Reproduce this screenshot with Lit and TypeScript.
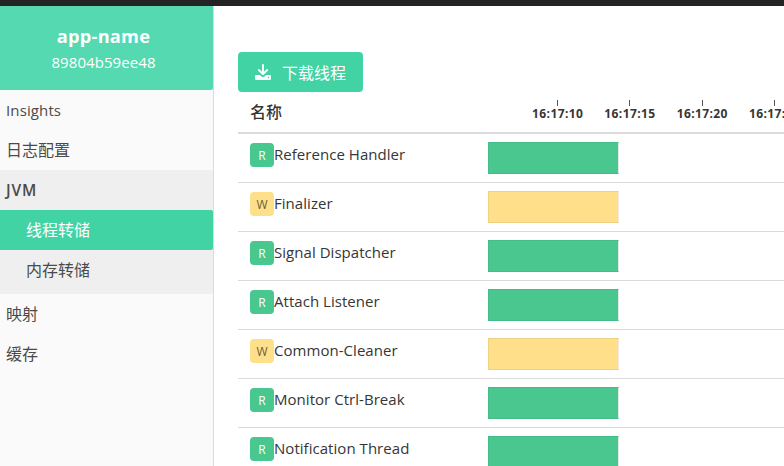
import { LitElement, html, css } from "lit";
import { customElement } from "lit/decorators.js";
import { classMap } from "lit/directives/class-map.js";

type ThreadState = "R" | "W";
interface Thread { name: string; state: ThreadState; }

const THREADS: Thread[] = [
  { name: "Reference Handler", state: "R" },
  { name: "Finalizer", state: "W" },
  { name: "Signal Dispatcher", state: "R" },
  { name: "Attach Listener", state: "R" },
  { name: "Common-Cleaner", state: "W" },
  { name: "Monitor Ctrl-Break", state: "R" },
  { name: "Notification Thread", state: "R" },
];

const TICKS = ["16:17:10", "16:17:15", "16:17:20", "16:17:25"];

@customElement("instance-sidebar")
class InstanceSidebar extends LitElement {
  static styles = css`
    :host { display: block; box-sizing: border-box; width: 214px; flex: none; background: #fafafa; border-right: 1px solid #dbdbdb; color: #4a4a4a; }
    .head { height: 84px; box-sizing: border-box; padding: 17px 6px 0 0; background: #55d9b0; color: #fff; text-align: center; border-radius: 0 0 2px 0; }
    .title { font-size: 18.2px; font-weight: 700; line-height: 26px; letter-spacing: 0.25px; }
    .id { font-size: 15px; line-height: 26px; letter-spacing: 0.08px; }
    .item { height: 40px; line-height: 40px; padding-left: 6px; font-size: 16px; }
    .latin { font-size: 15px; letter-spacing: 0.12px; }
    .group { background: #efefef; padding-bottom: 4px; }
    .strong { font-weight: 600; font-size: 15.5px; letter-spacing: 0.9px; }
    .sub { padding-left: 26px; }
    .active { background: #42d3a5; color: #fff; border-radius: 0 2px 2px 0; }
  `;
  render() {
    return html`
      <div class="head">
        <div class="title">app-name</div>
        <div class="id">89804b59ee48</div>
      </div>
      <div class="item latin">Insights</div>
      <div class="item">日志配置</div>
      <div class="group">
        <div class="item latin strong">JVM</div>
        <div class="item sub active">线程转储</div>
        <div class="item sub">内存转储</div>
      </div>
      <div class="item">映射</div>
      <div class="item">缓存</div>
    `;
  }
}

@customElement("thread-timeline")
class ThreadTimeline extends LitElement {
  static styles = css`
    :host { display: block; color: #363636; }
    .header { display: flex; height: 40px; border-bottom: 2px solid #dbdbdb; }
    .label { width: 238px; flex: none; padding-left: 12px; font-size: 16px; font-weight: 500; line-height: 40px; box-sizing: border-box; }
    .axis { display: flex; flex: none; padding-left: 45.5px; padding-top: 8px; }
    .tick { width: 72.3px; display: flex; flex-direction: column; align-items: center; font-size: 12px; font-weight: 700; line-height: 15px; letter-spacing: 0.4px; }
    .mark { width: 1px; height: 6px; background: #555; }
    .row { display: flex; height: 48px; border-bottom: 1px solid #dbdbdb; }
    .name { display: flex; box-sizing: border-box; width: 250px; flex: none; padding: 9px 0 0 12px; }
    .badge { width: 24px; height: 24px; border-radius: 4px; background: #48c78e; color: #fff; font-size: 12px; line-height: 25px; text-align: center; flex: none; }
    .text { font-size: 15px; line-height: 22px; letter-spacing: 0.04px; white-space: nowrap; }
    .bar { box-sizing: border-box; width: 131px; height: 32px; margin-top: 8px; background: #4ac78f; border: 1px solid #45bd88; border-right: 1px solid #e4e9e7; }
    .bar.waiting { background: #ffdf8a; border-color: #eed182; border-right-color: #ebe9e2; }
    .badge.waiting { background: #ffe08a; color: #6b5e3a; }
  `;
  render() {
    return html`
      <div class="header">
        <div class="label">名称</div>
        <div class="axis">
          ${TICKS.map((t) => html`<div class="tick"><span class="mark"></span><span>${t}</span></div>`)}
        </div>
      </div>
      ${THREADS.map((t) => {
        const waiting = t.state === "W";
        return html`<div class="row">
          <div class="name">
            <span class=${classMap({ badge: true, waiting })}>${t.state}</span>
            <span class="text">${t.name}</span>
          </div>
          <div class=${classMap({ bar: true, waiting })}></div>
        </div>`;
      })}
    `;
  }
}

@customElement("app-root")
class AppRoot extends LitElement {
  static styles = css`
    :host { display: flex; flex-direction: column; height: 100vh; overflow: hidden; background: #fff; font-family: "Open Sans", "Noto Sans CJK SC", sans-serif; }
    .top { height: 6px; flex: none; background: #242424; }
    .body { display: flex; flex: 1; min-height: 0; }
    .main { flex: 1; min-width: 0; overflow: hidden; padding: 46px 0 0 24px; }
    .download { display: flex; align-items: center; box-sizing: border-box; width: 125px; height: 40px; padding: 0 0 0 17px; gap: 11px; border: 0; border-radius: 4px; background: #42d3a5; color: #fff; font: inherit; font-size: 16px; white-space: nowrap; }
    .download svg { width: 16px; height: 16px; flex: none; }
  `;
  render() {
    return html`
      <div class="top"></div>
      <div class="body">
        <instance-sidebar></instance-sidebar>
        <div class="main">
          <button class="download">
            <svg viewBox="0 0 16 16" fill="none">
              <path d="M8 1V9.6M3.8 6L8 10L12.2 6" stroke="#fff" stroke-width="1.9" stroke-linecap="round" stroke-linejoin="round" />
              <path fill-rule="evenodd" fill="#fff" d="M1.2 11H4.8L6.6 12.4Q8 13.4 9.4 12.4L11.2 11H14.8Q16 11 16 12.2V14.8Q16 16 14.8 16H1.2Q0 16 0 14.8V12.2Q0 11 1.2 11ZM13.5 12.8a.75.75 0 1 0 0 1.5a.75.75 0 1 0 0-1.5Z" />
            </svg>
            <span>下载线程</span>
          </button>
          <thread-timeline></thread-timeline>
        </div>
      </div>
    `;
  }
}
